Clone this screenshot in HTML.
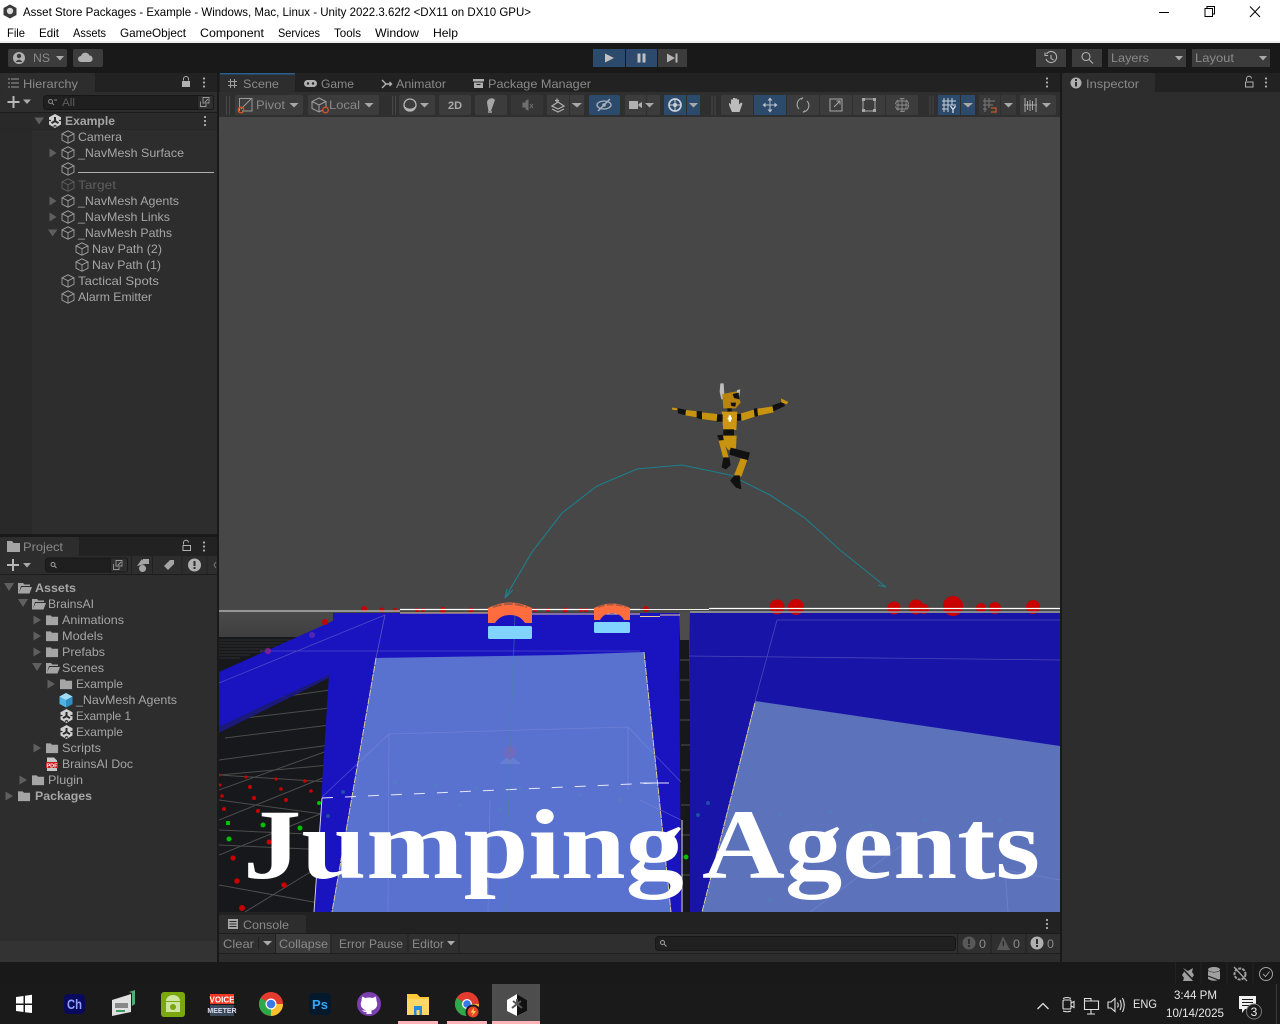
<!DOCTYPE html>
<html><head><meta charset="utf-8"><title>Unity Editor</title>
<style>
html,body{margin:0;padding:0;width:1280px;height:1024px;overflow:hidden;background:#191919}
svg{display:block}
text{font-family:"Liberation Sans",sans-serif;font-size:12px;fill:#a6a6a6}
.m text{fill:#000}
.d text{fill:#8a8a8a}
.b{font-weight:bold}
.btn{fill:#3c3c3c}
.blu{fill:#2c4a6b}
.ic{fill:none;stroke:#b0b0b0;stroke-width:1.1}
</style></head><body>
<svg width="1280" height="1024" viewBox="0 0 1280 1024" xmlns="http://www.w3.org/2000/svg">
<defs>
<symbol id="cube" viewBox="0 0 14 14" overflow="visible"><path d="M7 .8 13 3.8V10.2L7 13.3 1 10.2V3.8ZM1 3.8 7 6.8 13 3.8M7 6.8V13.3" fill="none" stroke="#a0a0a0" stroke-width=".9"/></symbol>
<symbol id="cubeg" viewBox="0 0 14 14" overflow="visible"><path d="M7 .8 13 3.8V10.2L7 13.3 1 10.2V3.8ZM1 3.8 7 6.8 13 3.8M7 6.8V13.3" fill="none" stroke="#5f5f5f" stroke-width=".9"/></symbol>
<symbol id="fold" viewBox="0 0 14 12" overflow="visible"><path d="M0 1H5L6.500 2.500H13V11.500H0Z" fill="#a5a5a5"/></symbol>
<symbol id="open" viewBox="0 0 14 12" overflow="visible"><path d="M0 1H5L6.500 2.500H12V4H3L1 10.500 3.600 5H14L11.500 11.500H0Z" fill="#a5a5a5"/></symbol>
<symbol id="unity" viewBox="0 0 14 14" overflow="visible"><path d="M7 0 13 3.300V10.500L7 14 1 10.500V3.300Z" fill="#d0d0d0"/><path d="M7 7V3M7 7 3.500 9.200M7 7 10.500 9.200" fill="none" stroke="#2b2b2b" stroke-width="2"/><path d="M1 6.500H3M11 6.500H13M5.500 12.500 7 11.500 8.500 12.500" stroke="#2b2b2b" stroke-width="1.300" fill="none"/></symbol>
</defs>

<!-- window chrome -->
<rect width="1280" height="42" fill="#fff"/><rect y="41" width="1280" height="2" fill="#f0f0f0"/>
<rect y="43" width="1280" height="30" fill="#191919"/>
<path d="M10 4.500 16.500 8V15L10 18.500 3.500 15V8Z" fill="#3a3a3a"/><circle cx="10" cy="11" r="3.200" fill="#ddd"/>
<g class="m">
<text x="23" y="16" textLength="508" lengthAdjust="spacingAndGlyphs">Asset Store Packages - Example - Windows, Mac, Linux - Unity 2022.3.62f2 &lt;DX11 on DX10 GPU&gt;</text>
<text x="7" y="37" textLength="18" lengthAdjust="spacingAndGlyphs">File</text>
<text x="39" y="37" textLength="20" lengthAdjust="spacingAndGlyphs">Edit</text>
<text x="73" y="37" textLength="33" lengthAdjust="spacingAndGlyphs">Assets</text>
<text x="120" y="37" textLength="66" lengthAdjust="spacingAndGlyphs">GameObject</text>
<text x="200" y="37" textLength="64" lengthAdjust="spacingAndGlyphs">Component</text>
<text x="278" y="37" textLength="42" lengthAdjust="spacingAndGlyphs">Services</text>
<text x="334" y="37" textLength="27" lengthAdjust="spacingAndGlyphs">Tools</text>
<text x="375" y="37" textLength="44" lengthAdjust="spacingAndGlyphs">Window</text>
<text x="433" y="37" textLength="25" lengthAdjust="spacingAndGlyphs">Help</text>
</g>
<path d="M1159 12.500H1169" stroke="#000"/>
<path d="M1205 8.500H1212.500V16.500H1205ZM1207 8V6.500H1214.500V14H1212.500" fill="none" stroke="#000"/>
<path d="M1250 6.500 1260 17M1260 6.500 1250 17" stroke="#000"/>

<!-- main toolbar -->
<rect x="8" y="49" width="59" height="18" rx="2" class="btn"/><rect x="73" y="49" width="30" height="18" rx="2" class="btn"/>
<circle cx="19" cy="58" r="6" fill="#b0b0b0"/><circle cx="19" cy="56" r="2.200" fill="#3c3c3c"/><path d="M15.500 62Q19 57.500 22.500 62" fill="#3c3c3c"/>
<g class="d"><text x="33" y="62" textLength="17" lengthAdjust="spacingAndGlyphs">NS</text></g>
<path d="M56 56H64L60 60.500Z" fill="#aaa"/>
<path d="M81 62a3 3 0 0 1 0-6a4.500 4.500 0 0 1 8.500-.5a3.300 3.300 0 0 1 .5 6.500Z" fill="#b0b0b0"/>
<rect x="593" y="49" width="32" height="18" class="blu"/><rect x="626" y="49" width="31" height="18" class="blu"/><rect x="658" y="49" width="29" height="18" class="btn"/>
<path d="M605 53.500 614 58 605 62.500Z" fill="#c0c0c0"/><rect x="637.500" y="53.500" width="3" height="9" fill="#c0c0c0"/><rect x="642.500" y="53.500" width="3" height="9" fill="#c0c0c0"/>
<path d="M667 53.500 675 58 667 62.500Z" fill="#b5b5b5"/><rect x="675.500" y="53.500" width="2" height="9" fill="#b5b5b5"/>
<rect x="1036" y="49" width="30" height="18" class="btn"/><rect x="1072" y="49" width="30" height="18" class="btn"/><rect x="1108" y="49" width="78" height="18" class="btn"/><rect x="1192" y="49" width="78" height="18" class="btn"/>
<path d="M1046.500 54a5.500 5.500 0 1 1-.5 5M1051 55V58.500L1053.500 60M1045 52.500V55.500H1048" class="ic"/>
<circle cx="1086" cy="56.500" r="4" class="ic"/><path d="M1089 59.500 1093 63.500" class="ic"/>
<g class="d"><text x="1111" y="62" textLength="38" lengthAdjust="spacingAndGlyphs">Layers</text><text x="1195" y="62" textLength="39" lengthAdjust="spacingAndGlyphs">Layout</text></g>
<path d="M1175 56H1183L1179 60.500ZM1259 56H1267L1263 60.500Z" fill="#aaa"/>

<!-- hierarchy -->
<rect x="0" y="73" width="217" height="889" fill="#2d2d2d"/>
<rect x="0" y="73" width="217" height="19" fill="#222"/>
<rect x="0" y="73" width="95" height="19" rx="2" fill="#2d2d2d"/>
<path d="M8 79H10M11 79H19M8 83H10M11 83H19M8 87H10M11 87H19" stroke="#999"/>
<g class="d"><text x="23" y="88" textLength="55" lengthAdjust="spacingAndGlyphs">Hierarchy</text></g>
<path d="M183.500 80.500V79a2.500 2.500 0 0 1 5 0V80.500" fill="none" stroke="#b0b0b0"/><rect x="182" y="81" width="8" height="6" fill="#b0b0b0"/>
<circle cx="204" cy="78.500" r="1.100" fill="#b0b0b0"/><circle cx="204" cy="82.500" r="1.100" fill="#b0b0b0"/><circle cx="204" cy="86.500" r="1.100" fill="#b0b0b0"/>
<path d="M13.500 96V108M7.500 102H19.500" stroke="#b8b8b8" stroke-width="2"/><path d="M23 99.500H31L27 104Z" fill="#aaa"/>
<rect x="43.500" y="95.500" width="170" height="14" rx="3" fill="#1f1f1f" stroke="#171717"/>
<rect x="197.500" y="95.500" width="16" height="14" rx="2" fill="#2f2f2f" stroke="#1a1a1a"/>
<path d="M200.500 101.500V106.500H206V104M203 99V103H209V97.500H203ZM205 102 208 99" fill="none" stroke="#999" stroke-width=".9"/>
<circle cx="50.500" cy="101.500" r="2" fill="none" stroke="#8a8a8a"/><path d="M52 103 54 105M54 100H57" stroke="#8a8a8a"/>
<text x="62" y="106" textLength="13" lengthAdjust="spacingAndGlyphs" style="font-size:11px;fill:#5d5d5d">All</text>
<rect x="0" y="112" width="217" height="1" fill="#1c1c1c"/>
<rect x="0" y="113" width="32" height="421" fill="#292929"/>
<rect x="32" y="113" width="185" height="16" fill="#2a2a2a"/><rect x="0" y="129" width="217" height="1" fill="#272727"/>
<path d="M34.500 117.500H44L39 124.500Z" fill="#5f5f5f"/>
<use href="#unity" x="48" y="114" width="14" height="14"/>
<text x="65" y="125" textLength="50" lengthAdjust="spacingAndGlyphs" class="b">Example</text>
<circle cx="205" cy="117" r="1.100" fill="#b0b0b0"/><circle cx="205" cy="121" r="1.100" fill="#b0b0b0"/><circle cx="205" cy="125" r="1.100" fill="#b0b0b0"/>
<use href="#cube" x="61" y="130" width="14" height="14"/><text x="78" y="141" textLength="44" lengthAdjust="spacingAndGlyphs">Camera</text>
<path d="M49.500 148.500V157.500L56.500 153Z" fill="#5f5f5f"/>
<use href="#cube" x="61" y="146" width="14" height="14"/><text x="78" y="157" textLength="106" lengthAdjust="spacingAndGlyphs">_NavMesh Surface</text>
<use href="#cube" x="61" y="162" width="14" height="14"/><rect x="78" y="172" width="136" height="1" fill="#aeaeae"/>
<use href="#cubeg" x="61" y="178" width="14" height="14"/><text x="78" y="189" textLength="38" lengthAdjust="spacingAndGlyphs" style="fill:#5f5f5f">Target</text>
<path d="M49.500 196.500V205.500L56.500 201Z" fill="#5f5f5f"/>
<use href="#cube" x="61" y="194" width="14" height="14"/><text x="78" y="205" textLength="101" lengthAdjust="spacingAndGlyphs">_NavMesh Agents</text>
<path d="M49.500 212.500V221.500L56.500 217Z" fill="#5f5f5f"/>
<use href="#cube" x="61" y="210" width="14" height="14"/><text x="78" y="221" textLength="92" lengthAdjust="spacingAndGlyphs">_NavMesh Links</text>
<path d="M48 229.500H57.500L52.500 236.500Z" fill="#5f5f5f"/>
<use href="#cube" x="61" y="226" width="14" height="14"/><text x="78" y="237" textLength="94" lengthAdjust="spacingAndGlyphs">_NavMesh Paths</text>
<use href="#cube" x="75" y="242" width="14" height="14"/><text x="92" y="253" textLength="70" lengthAdjust="spacingAndGlyphs">Nav Path (2)</text>
<use href="#cube" x="75" y="258" width="14" height="14"/><text x="92" y="269" textLength="69" lengthAdjust="spacingAndGlyphs">Nav Path (1)</text>
<use href="#cube" x="61" y="274" width="14" height="14"/><text x="78" y="285" textLength="81" lengthAdjust="spacingAndGlyphs">Tactical Spots</text>
<use href="#cube" x="61" y="290" width="14" height="14"/><text x="78" y="301" textLength="74" lengthAdjust="spacingAndGlyphs">Alarm Emitter</text>

<!-- project -->
<rect x="0" y="534" width="217" height="3" fill="#191919"/>
<rect x="0" y="537" width="217" height="19" fill="#222"/><rect x="0" y="537" width="79" height="19" rx="2" fill="#2d2d2d"/>
<path d="M7 541H12L13.500 543H20V552H7Z" fill="#a5a5a5"/>
<g class="d"><text x="23" y="551" textLength="40" lengthAdjust="spacingAndGlyphs">Project</text></g>
<path d="M183.500 544.500V543a2.500 2.500 0 0 1 5-.5" fill="none" stroke="#b0b0b0"/><rect x="183" y="545.500" width="7.500" height="5" fill="none" stroke="#b0b0b0"/>
<circle cx="204" cy="542.500" r="1.100" fill="#b0b0b0"/><circle cx="204" cy="546.500" r="1.100" fill="#b0b0b0"/><circle cx="204" cy="550.500" r="1.100" fill="#b0b0b0"/>
<path d="M13 559V571M7 565H19" stroke="#b8b8b8" stroke-width="2"/><path d="M23 563H31L27 567.500Z" fill="#aaa"/>
<rect x="45.500" y="558" width="82" height="14" rx="3" fill="#1f1f1f" stroke="#171717"/>
<rect x="110.500" y="558" width="17" height="14" rx="2" fill="#2f2f2f" stroke="#1a1a1a"/>
<path d="M113.500 564V569.500H119V567M116 561.500V566H122V560.500H116ZM118 565 121 562" fill="none" stroke="#999" stroke-width=".9"/>
<circle cx="53" cy="564.500" r="2" fill="none" stroke="#a0a0a0"/><path d="M54.500 566 56.500 568" stroke="#a0a0a0"/>
<path d="M131.500 556V574M152.500 556V574M182 556V574M207 556V574" stroke="#222"/>
<path d="M137 566 142 559 145 564ZM142.500 565a3.500 3.500 0 1 0 .1 0ZM143 559H149V564H143Z" fill="#a5a5a5"/>
<path d="M164 566 170 560H174V564L168 570Z" fill="#a5a5a5"/>
<circle cx="194.500" cy="565" r="6.500" fill="#b0b0b0"/><rect x="193.500" y="561" width="2" height="5" fill="#2d2d2d"/><rect x="193.500" y="567" width="2" height="2" fill="#2d2d2d"/>
<path d="M216 562 214 565 216 568" fill="none" stroke="#777"/>
<rect x="0" y="574" width="217" height="1" fill="#1c1c1c"/>
<path d="M4 583H14L9 591Z" fill="#5f5f5f"/><use href="#open" x="18" y="582" width="14" height="12"/><text x="35" y="592" textLength="41" lengthAdjust="spacingAndGlyphs" class="b">Assets</text>
<path d="M18 599H28L23 607Z" fill="#5f5f5f"/><use href="#open" x="32" y="598" width="14" height="12"/><text x="48" y="608" textLength="46" lengthAdjust="spacingAndGlyphs">BrainsAI</text>
<path d="M33.500 615.500V624.500L41 620Z" fill="#5f5f5f"/><use href="#fold" x="46" y="614" width="13" height="12"/><text x="62" y="624" textLength="62" lengthAdjust="spacingAndGlyphs">Animations</text>
<path d="M33.500 631.500V640.500L41 636Z" fill="#5f5f5f"/><use href="#fold" x="46" y="630" width="13" height="12"/><text x="62" y="640" textLength="41" lengthAdjust="spacingAndGlyphs">Models</text>
<path d="M33.500 647.500V656.500L41 652Z" fill="#5f5f5f"/><use href="#fold" x="46" y="646" width="13" height="12"/><text x="62" y="656" textLength="43" lengthAdjust="spacingAndGlyphs">Prefabs</text>
<path d="M32 663H42L37 671Z" fill="#5f5f5f"/><use href="#open" x="46" y="662" width="14" height="12"/><text x="62" y="672" textLength="42" lengthAdjust="spacingAndGlyphs">Scenes</text>
<path d="M47.500 679.500V688.500L55 684Z" fill="#5f5f5f"/><use href="#fold" x="60" y="678" width="13" height="12"/><text x="76" y="688" textLength="47" lengthAdjust="spacingAndGlyphs">Example</text>
<path d="M66 693 72.500 696.500V704L66 707.500 59.500 704V696.500Z" fill="#4fb4e4"/><path d="M59.500 696.500 66 700 72.500 696.500 66 693Z" fill="#a5dcf4"/><path d="M66 700V707.500L72.500 704V696.500Z" fill="#2f8fc4"/>
<text x="76" y="704" textLength="101" lengthAdjust="spacingAndGlyphs">_NavMesh Agents</text>
<use href="#unity" x="59.500" y="709" width="14" height="14"/><text x="76" y="720" textLength="55" lengthAdjust="spacingAndGlyphs">Example 1</text>
<use href="#unity" x="59.500" y="725" width="14" height="14"/><text x="76" y="736" textLength="47" lengthAdjust="spacingAndGlyphs">Example</text>
<path d="M33.500 743.500V752.500L41 748Z" fill="#5f5f5f"/><use href="#fold" x="46" y="742" width="13" height="12"/><text x="62" y="752" textLength="39" lengthAdjust="spacingAndGlyphs">Scripts</text>
<path d="M47 757.500H54L57 760.500V771H47Z" fill="#c8c8c8"/><rect x="46" y="762" width="12" height="6" fill="#c81818"/><text x="52" y="767.300" text-anchor="middle" style="font-size:5.500px;font-weight:bold;fill:#fff">PDF</text>
<text x="62" y="768" textLength="71" lengthAdjust="spacingAndGlyphs">BrainsAI Doc</text>
<path d="M19.500 775.500V784.500L27 780Z" fill="#5f5f5f"/><use href="#fold" x="32" y="774" width="13" height="12"/><text x="48" y="784" textLength="35" lengthAdjust="spacingAndGlyphs">Plugin</text>
<path d="M5.500 791.500V800.500L13 796Z" fill="#5f5f5f"/><use href="#fold" x="18" y="790" width="13" height="12"/><text x="35" y="800" textLength="57" lengthAdjust="spacingAndGlyphs" class="b">Packages</text>
<rect x="0" y="941" width="217" height="21" fill="#333"/>

<!-- tabs for scene -->
<rect x="219" y="73" width="841" height="19" fill="#222"/>
<rect x="220" y="73" width="75" height="19" rx="2" fill="#2d2d2d"/><rect x="220" y="73" width="75" height="1.500" fill="#2c5d8f"/>
<path d="M230.500 79V88M234.500 79V88M228 81.500H237M228 85.500H237" stroke="#a0a0a0"/>
<g class="d">
<text x="243" y="88" textLength="36" lengthAdjust="spacingAndGlyphs">Scene</text>
<text x="321" y="88" textLength="33" lengthAdjust="spacingAndGlyphs">Game</text>
<text x="396" y="88" textLength="50" lengthAdjust="spacingAndGlyphs">Animator</text>
<text x="488" y="88" textLength="103" lengthAdjust="spacingAndGlyphs">Package Manager</text>
</g>
<rect x="304" y="80" width="13" height="7" rx="3.500" fill="#b0b0b0"/><circle cx="308" cy="83.500" r="1.200" fill="#222"/><circle cx="313" cy="83.500" r="1.200" fill="#222"/>
<path d="M382 80 386 84 382 88M386 84H392M389.500 82 391.500 84 389.500 86" fill="none" stroke="#b0b0b0" stroke-width="1.400"/>
<path d="M473 79H484V81.500H473ZM474 82.500H483V88H474Z" fill="#b0b0b0"/><rect x="476.500" y="84" width="4" height="1" fill="#222"/>
<circle cx="1047" cy="78.500" r="1.100" fill="#b0b0b0"/><circle cx="1047" cy="82.500" r="1.100" fill="#b0b0b0"/><circle cx="1047" cy="86.500" r="1.100" fill="#b0b0b0"/>

<!-- scene toolbar -->
<rect x="219" y="92" width="841" height="25" fill="#2f2f2f"/>
<path d="M226.500 96V115M229.500 96V115M392.500 96V115M395.500 96V115M712 96V115M715 96V115M930 96V115M933 96V115" stroke="#474747"/>
<rect x="235" y="95" width="68" height="20" rx="2" class="btn"/><rect x="308" y="95" width="71" height="20" rx="2" class="btn"/>
<rect x="399" y="95" width="36" height="20" rx="2" class="btn"/><rect x="439" y="95" width="32" height="20" rx="2" class="btn"/><rect x="475" y="95" width="32" height="20" rx="2" class="btn"/>
<rect x="511" y="95" width="32" height="20" rx="2" fill="#363636"/><rect x="547" y="95" width="22" height="20" class="btn"/><rect x="570" y="95" width="14" height="20" class="btn"/>
<rect x="589" y="95" width="31" height="20" rx="2" class="blu"/><rect x="625" y="95" width="21" height="20" class="btn"/><rect x="647" y="95" width="13" height="20" class="btn"/>
<rect x="664" y="95" width="22" height="20" class="blu"/><rect x="687" y="95" width="13" height="20" class="blu"/>
<rect x="721" y="95" width="32" height="20" class="btn"/><rect x="754" y="95" width="32" height="20" class="blu"/><rect x="787" y="95" width="32" height="20" class="btn"/><rect x="820" y="95" width="32" height="20" class="btn"/><rect x="853" y="95" width="32" height="20" class="btn"/><rect x="886" y="95" width="32" height="20" class="btn"/>
<rect x="938" y="95" width="22" height="20" class="blu"/><rect x="961" y="95" width="14" height="20" class="blu"/><rect x="979" y="95" width="21" height="20" fill="#383838"/><rect x="1001" y="95" width="15" height="20" fill="#383838"/><rect x="1020" y="95" width="36" height="20" rx="2" class="btn"/>
<path d="M239.500 111V98.500H252V111H242" fill="none" stroke="#9a9a9a"/><path d="M241 109 251 99" stroke="#9a9a9a"/><circle cx="241" cy="110" r="2.800" fill="none" stroke="#d2532a" stroke-width="1.300"/>
<g class="d"><text x="256" y="109" textLength="29" lengthAdjust="spacingAndGlyphs">Pivot</text><text x="329" y="109" textLength="31" lengthAdjust="spacingAndGlyphs">Local</text></g>
<path d="M289.500 103H298.500L294 107.500ZM364.500 103H373.500L369 107.500ZM420 103H429L424.500 107.500ZM571.500 103H582L577 107.500ZM645 103H654L649.500 107.500ZM689 103H698L693.500 107.500ZM963 103H973L968 107.500ZM1004 103H1013L1008.500 107.500ZM1042 103H1051L1046.500 107.500Z" fill="#a8a8a8"/>
<path d="M319 98 326 101.500V108.500L319 112 312 108.500V101.500ZM312 101.500 319 105 326 101.500M319 105V112" fill="none" stroke="#a0a0a0"/><circle cx="325.500" cy="110" r="2.800" fill="#3c3c3c" stroke="#d2532a" stroke-width="1.300"/>
<circle cx="410" cy="105" r="6" fill="none" stroke="#b5b5b5" stroke-width="1.300"/><path d="M404.500 106a5.500 5.500 0 0 0 11 0 7 7 0 0 1-11 0Z" fill="#b5b5b5"/>
<text x="448" y="109" textLength="14" lengthAdjust="spacingAndGlyphs" class="b" style="font-size:11px;fill:#aaa">2D</text>
<path d="M487 103a4.500 4.500 0 0 1 8-3L491 111H488.500Z" fill="#a5a5a5"/><path d="M488 112H492" stroke="#a5a5a5" stroke-width="1.500"/>
<path d="M523 103H525V107H523ZM526 101 528 100V110L526 109ZM530 104 533 108M533 104 530 108" stroke="#6e6e6e" fill="#6e6e6e"/>
<path d="M552 106 558 102 564 106 558 109ZM552 109 558 112 564 109M557 98.500V103M555 100.500H559" fill="none" stroke="#b0b0b0" stroke-width="1.200"/>
<ellipse cx="604" cy="105" rx="7" ry="4" fill="none" stroke="#aab3bd" stroke-width="1.300"/><circle cx="604" cy="105" r="1.800" fill="#aab3bd"/><path d="M598 111 610 99" stroke="#aab3bd" stroke-width="1.400"/>
<rect x="629" y="101" width="9" height="8" fill="#b0b0b0"/><path d="M638.500 104 642 102V108L638.500 106Z" fill="#b0b0b0"/>
<circle cx="675" cy="105" r="6" fill="none" stroke="#c8d0d8" stroke-width="1.700"/><circle cx="675" cy="105" r="2" fill="#c8d0d8"/><path d="M675 99V111M669 105H681" stroke="#c8d0d8" stroke-width="1"/>
<path d="M732 112 729 105V102.500L731 104.500V99.500H733V103V98H735V103V98.500H737V103V99.500H739V104.500L741 102.500 742.500 103.500 739.500 112Z" fill="#bcbcbc"/>
<path d="M770 97.500 772.500 100.500H767.500ZM770 112.500 772.500 109.500H767.500ZM762.500 105 765.500 102.500V107.500ZM777.500 105 774.500 102.500V107.500Z" fill="#b8c0c8"/><path d="M770 100V110M765 105H775" stroke="#b8c0c8"/>
<path d="M799 109a6.500 6.500 0 0 1 4-11M807 101a6.500 6.500 0 0 1-4 11M803 97.500 801 99.500M803 112.500 805 110.500" fill="none" stroke="#a8a8a8" stroke-width="1.100"/>
<rect x="830" y="99" width="12" height="12" fill="none" stroke="#a8a8a8"/><path d="M834 107 840 101M836.500 101H840V104.500" fill="none" stroke="#a8a8a8"/>
<path d="M864 99H874M864 111H874M863 100V110M875 100V110" stroke="#a8a8a8" stroke-width="1"/><rect x="862" y="98" width="3" height="3" fill="#a8a8a8"/><rect x="873" y="98" width="3" height="3" fill="#a8a8a8"/><rect x="862" y="109" width="3" height="3" fill="#a8a8a8"/><rect x="873" y="109" width="3" height="3" fill="#a8a8a8"/>
<circle cx="902" cy="105" r="6.500" fill="none" stroke="#8e8e8e" stroke-dasharray="5 2"/><path d="M902 99V111M896 105H908M898 101H906V109H898Z" fill="none" stroke="#8e8e8e" stroke-width=".9"/>
<path d="M944 98V112M948 98V112M952 98V105M942 101H956M942 105H956M942 109H948" stroke="#c8d0d8"/><path d="M950.500 106 953 109.500 955.500 106M953 109.500V113" fill="none" stroke="#d8dde2" stroke-width="1.300"/>
<path d="M985 98V112M989 98V108M983 101H995M983 105H993M983 109H987" stroke="#797979"/><path d="M991 108H996V112H991" fill="none" stroke="#b2502a" stroke-width="1.500"/>
<path d="M1025 98V112M1036 98V112M1027.500 101V110M1030 100V111M1032.500 101V110M1024 105H1037" stroke="#a8a8a8"/>

<!-- scene view -->
<rect x="219" y="117" width="841" height="795" fill="#474747"/>
<svg x="219" y="117" width="841" height="795" viewBox="219 117 841 795">
<!-- ground -->
<linearGradient id="gg" x1="0" y1="0" x2="0" y2="1"><stop offset="0" stop-color="#4a4a4a"/><stop offset="1" stop-color="#3f3f3f"/></linearGradient>
<rect x="219" y="612" width="120" height="25" fill="url(#gg)"/>
<rect x="219" y="637" width="120" height="275" fill="#17181b"/>
<g stroke="#2e2e2e" stroke-width="1"><path d="M219 640H300M219 643H290M219 646H280M219 649H270M219 652H262M219 655H250M219 658H240"/></g>
<g stroke="#4c4c4c" stroke-width="1" fill="none">
<path d="M260 700 330 690M245 718 330 708M225 738 330 725M219 760 330 745M219 775 330 765"/>
<path d="M219 790 330 750M219 820 330 775M219 855 330 810M245 912 330 860"/>
<path d="M219 775 330 782M219 800 330 815M219 845 330 850M219 885 330 905M219 830 330 835"/>
</g>
<!-- blue -->
<path d="M219 672 333 621V613H681V912H314L329 675 276 700 219 727Z" fill="#1a14c0"/>
<path d="M219 727 329 675V678L219 733Z" fill="#1c1a78"/>
<path d="M219 683 385 615M260 651H640" stroke="#5a57c8" stroke-width=".8" fill="none" opacity=".8"/>
<path d="M385 615 376 658" stroke="#5a57c8" stroke-width=".8"/>
<circle cx="312" cy="635" r="3" fill="#6a2db0" opacity=".7"/><circle cx="268" cy="651" r="3.200" fill="#8a2090" opacity=".8"/>
<!-- light panels -->
<path d="M376 658 560 655 644 652 671 912H332Z" fill="#5a72cf"/>
<path d="M376 658 332 912M644 652 671 912" fill="none" stroke="#e8d79a" stroke-width=".9" stroke-dasharray="7 1"/>
<!-- gap -->
<path d="M679 612H689L692 912H681Z" fill="#17181b"/><path d="M679 612H689V640H680Z" fill="#4c4c4c"/>
<path d="M680 660H689M680 680H689M680 700H690M680 720H690M681 745H691M681 770H691M681 805H691M681 835H692M681 875H692" stroke="#4e4e4e"/>
<!-- right -->
<rect x="690" y="613" width="370" height="299" fill="#1914a8"/>
<path d="M755 701 1060 746V912H702Z" fill="#5c73bc"/>
<path d="M755 703 702 912" stroke="#e8d79a" stroke-width=".9" stroke-dasharray="7 1"/>
<path d="M777 620 755 701M777 620H1060M689 656 1060 660" stroke="#4a47b8" stroke-width=".8" fill="none"/>
<!-- wire box -->
<g stroke="#8492dc" stroke-width=".8" fill="none" opacity=".45">
<path d="M389 734 628 727 681 782M389 734 388 912M628 727 628 790M389 734 322 797M640 800 681 820M488 912 490 800M1005 870 1060 880M1005 870 1008 912"/>
<path d="M909 840 810 912"/>
</g>
<path d="M322 798 655 783" stroke="#e8e6f8" stroke-width="1" stroke-dasharray="11 12"/>
<path d="M322 798 314 912" stroke="#e0d8f0" stroke-width=".9"/>
<path d="M640 783H669" stroke="#e8e6f8"/>
<path d="M682 820V912" stroke="#dcd8f8" fill="none"/>
<!-- teal line -->
<path d="M515 615 510 760 505 912" stroke="#3f8a92" stroke-width=".7" opacity=".7" fill="none"/>
<path d="M505 598 532 552 562 513 597 486 637 469 682 465 730 475 770 495 805 518 840 550 886 587M505 598 513 590M505 598 507 589M886 587 878 585" stroke="#1d7f8c" stroke-width="1.100" fill="none"/>
<!-- faint spawn -->
<g opacity=".3"><path d="M500 763 510 755 520 763V764H501Z" fill="#8a9ce0"/><path d="M510 745 516 749V756L510 760 504 756V749Z" fill="#a05ca0"/></g>
<!-- dots -->
<g fill="#c80000">
<circle cx="364" cy="609" r="3"/><circle cx="382" cy="610" r="2.500"/><circle cx="395" cy="610" r="2"/><circle cx="417" cy="610" r="2"/><circle cx="423" cy="610" r="2"/><circle cx="443" cy="610" r="3"/><circle cx="471" cy="610" r="2.500"/><circle cx="535" cy="610" r="2"/><circle cx="548" cy="610" r="2"/><circle cx="565" cy="610" r="2.500"/><circle cx="581" cy="610" r="2"/><circle cx="586" cy="610" r="2"/><circle cx="646" cy="609" r="3"/>
<circle cx="777" cy="607" r="7.500"/><circle cx="796" cy="607" r="8"/><circle cx="894" cy="608" r="6.500"/><circle cx="916" cy="607" r="7.500"/><circle cx="924" cy="609" r="5"/><circle cx="953" cy="606" r="10"/><circle cx="981" cy="608" r="5"/><circle cx="995" cy="608" r="6"/><circle cx="1033" cy="607" r="7"/>
<circle cx="325" cy="622" r="3"/>
<circle cx="219" cy="775" r="1.500"/><circle cx="220" cy="785" r="1.500"/><circle cx="222" cy="796" r="1.800"/><circle cx="224" cy="809" r="2"/><circle cx="246" cy="777" r="1.600"/><circle cx="250" cy="787" r="2"/><circle cx="254" cy="798" r="2"/><circle cx="258" cy="811" r="2"/><circle cx="276" cy="779" r="1.600"/><circle cx="281" cy="789" r="1.800"/><circle cx="286" cy="800" r="2"/><circle cx="305" cy="781" r="1.800"/><circle cx="311" cy="791" r="1.800"/>
<circle cx="269" cy="842" r="2.500"/><circle cx="233" cy="858" r="2.600"/><circle cx="237" cy="881" r="2.800"/><circle cx="284" cy="885" r="2.800"/><circle cx="242" cy="908" r="3"/>
</g>
<g fill="#00c000"><rect x="226" y="821" width="4" height="4"/><circle cx="263" cy="825" r="2.500"/><circle cx="300" cy="828" r="2.500"/><circle cx="229" cy="839" r="2.500"/><circle cx="319" cy="803" r="2"/><circle cx="686" cy="857" r="2.500"/></g>
<g fill="#1d4fa8"><circle cx="343" cy="792" r="2"/><circle cx="328" cy="816" r="2"/><circle cx="708" cy="803" r="2"/><circle cx="698" cy="815" r="2"/></g>
<g fill="#4a8cb0" opacity=".35"><circle cx="395" cy="783" r="2"/><circle cx="436" cy="786" r="2"/><circle cx="476" cy="788" r="2"/><circle cx="520" cy="789" r="2"/><circle cx="580" cy="795" r="2"/><circle cx="620" cy="800" r="2"/><circle cx="460" cy="805" r="2"/><circle cx="500" cy="810" r="2"/><circle cx="780" cy="815" r="2"/><circle cx="830" cy="812" r="2"/><circle cx="870" cy="825" r="2"/><circle cx="925" cy="820" r="2"/><circle cx="955" cy="835" r="2"/><circle cx="1000" cy="820" r="2"/><circle cx="770" cy="900" r="2"/></g>
<!-- horizon lines -->
<path d="M219 611H400" stroke="#c4c4c4" stroke-width="1.200"/>
<path d="M400 609.500H640" stroke="#fff" stroke-width="1.200"/>
<path d="M709 608.500H1060" stroke="#fff" stroke-width="1.300"/><path d="M640 609.500H709" stroke="#eee"/>
<path d="M690 612H1060" stroke="#9aa0a8" stroke-width="1.500"/>
<path d="M400 613H500M500 614H640M640 616.500H660M660 615H680" stroke="#e8c98a" stroke-width=".9"/>
<!-- waypoints -->
<path d="M488 623V608Q510 597 532 608V623H525Q520 615 510 615Q500 615 495 623Z" fill="#ff6d3f"/>
<path d="M493 607Q510 601 527 607" stroke="#a85a42" stroke-width="2" fill="none" stroke-dasharray="9 2"/>
<rect x="488" y="626" width="44" height="13" rx="1.500" fill="#80d4ff"/>
<path d="M594 620V608Q612 599 630 608V620H624Q620 613 612 613Q604 613 600 620Z" fill="#ff6d3f"/>
<path d="M598 607Q612 602 626 607" stroke="#a85a42" stroke-width="1.800" fill="none" stroke-dasharray="7 2"/>
<rect x="594" y="622" width="36" height="11" rx="1.500" fill="#80d4ff"/>
<!-- character -->
<g transform="translate(640 370) scale(.3333)">
<path d="M241 40 251 40 254 88 244 88 239 65ZM301 58 296 92 288 90 291 60Z" fill="#bcbcbc"/>
<path d="M247 72 290 64 302 98 287 115 250 115Z" fill="#b8840f"/>
<path d="M278 72 296 68 298 88 282 84ZM272 98 288 98 286 110 274 108Z" fill="#111"/>
<rect x="262" y="115" width="13" height="11" fill="#111"/>
<path d="M245 125H292L289 180H250Z" fill="#cd9714"/>
<path d="M229 133H248V155H229ZM291 132H303V152H291Z" fill="#111"/>
<path d="M266 136H273V155H266ZM263 143H276V148H263Z" fill="#fff"/>
<path d="M250 178H282V197H250Z" fill="#111"/>
<path d="M250 197H290L288 235 265 240 250 220Z" fill="#c8930f"/>
<path d="M96 113 116 115 116 121 96 119Z" fill="#c8930f"/>
<path d="M112 114 140 120 138 136 114 130Z" fill="#111"/>
<path d="M138 120 174 124 172 142 136 136ZM185 127 232 132 230 153 184 147Z" fill="#c8930f"/>
<path d="M170 123 186 124 186 148 170 144Z" fill="#111"/>
<path d="M303 130 342 119 345 140 305 153Z" fill="#c8930f"/>
<path d="M341 116 352 114 355 138 344 140Z" fill="#111"/>
<path d="M352 116 399 109 401 127 354 137Z" fill="#c8930f"/>
<path d="M397 106 430 94 435 108 400 124Z" fill="#111"/>
<path d="M423 85 445 96 440 103 424 97Z" fill="#c8930f"/>
<path d="M231 196 248 194 252 215 240 216Z" fill="#111"/>
<path d="M236 212 251 210 266 262 250 266Z" fill="#c8930f"/>
<path d="M250 262 268 262 272 285 258 298 245 292Z" fill="#111"/>
<path d="M272 233 330 248 324 271 268 254Z" fill="#111"/>
<path d="M302 265 322 270 304 320 282 316Z" fill="#c8930f"/>
<path d="M283 316 299 316 304 358 288 353 270 332Z" fill="#111"/>
</g>
<!-- title text -->
<text x="243" y="878" textLength="441" lengthAdjust="spacingAndGlyphs" style='font-family:"Liberation Serif",serif;font-weight:bold;font-size:100px;fill:#fff'>Jumping</text>
<text x="702" y="878" textLength="338" lengthAdjust="spacingAndGlyphs" style='font-family:"Liberation Serif",serif;font-weight:bold;font-size:100px;fill:#fff'>Agents</text>
</svg>
<rect x="1060" y="92" width="2" height="870" fill="#191919"/>

<!-- inspector -->
<rect x="1062" y="73" width="218" height="889" fill="#2d2d2d"/><rect x="1062" y="73" width="218" height="19" fill="#222"/>
<rect x="1062" y="73" width="93" height="19" rx="2" fill="#2d2d2d"/>
<circle cx="1076" cy="83" r="5.500" fill="#b0b0b0"/><rect x="1075" y="82" width="2" height="4.500" fill="#2d2d2d"/><rect x="1075" y="79" width="2" height="2" fill="#2d2d2d"/>
<g class="d"><text x="1086" y="88" textLength="53" lengthAdjust="spacingAndGlyphs">Inspector</text></g>
<path d="M1246.500 81V79a2.500 2.500 0 0 1 5-.5" fill="none" stroke="#b0b0b0"/><rect x="1245.500" y="82" width="7.500" height="5" fill="none" stroke="#b0b0b0"/>
<circle cx="1266" cy="78.500" r="1.100" fill="#b0b0b0"/><circle cx="1266" cy="82.500" r="1.100" fill="#b0b0b0"/><circle cx="1266" cy="86.500" r="1.100" fill="#b0b0b0"/>

<!-- console -->
<rect x="219" y="912" width="841" height="50" fill="#2d2d2d"/><rect x="219" y="912" width="841" height="22" fill="#222"/>
<rect x="219" y="915" width="87" height="19" rx="2" fill="#2d2d2d"/>
<rect x="228" y="919" width="10" height="10" fill="#a8a8a8"/><path d="M229.500 921.500H236.500M229.500 924H236.500M229.500 926.500H236.500" stroke="#2d2d2d"/>
<g class="d"><text x="243" y="929" textLength="46" lengthAdjust="spacingAndGlyphs">Console</text></g>
<circle cx="1047" cy="920" r="1.100" fill="#b0b0b0"/><circle cx="1047" cy="924" r="1.100" fill="#b0b0b0"/><circle cx="1047" cy="928" r="1.100" fill="#b0b0b0"/>
<rect x="219" y="934" width="841" height="19" fill="#2f2f2f"/><rect x="219" y="933" width="841" height="1" fill="#1c1c1c"/><rect x="219" y="953" width="841" height="1" fill="#1f1f1f"/>
<rect x="276" y="934" width="54" height="19" fill="#3c3c3c"/>
<path d="M258.500 937V949M275.500 934V953M331 934V953M408 934V953M459 934V953M957.500 934V953M991 934V953M1026 934V953" stroke="#202020"/>
<g class="d">
<text x="223" y="948" textLength="31" lengthAdjust="spacingAndGlyphs">Clear</text>
<text x="279" y="948" textLength="49" lengthAdjust="spacingAndGlyphs">Collapse</text>
<text x="339" y="948" textLength="64" lengthAdjust="spacingAndGlyphs">Error Pause</text>
<text x="412" y="948" textLength="32" lengthAdjust="spacingAndGlyphs">Editor</text>
<text x="979" y="948" textLength="7" lengthAdjust="spacingAndGlyphs">0</text>
<text x="1013" y="948" textLength="7" lengthAdjust="spacingAndGlyphs">0</text>
<text x="1047" y="948" textLength="7" lengthAdjust="spacingAndGlyphs">0</text>
</g>
<path d="M263 941H272L267.500 945.500ZM447 941H455L451 945.500Z" fill="#aaa"/>
<rect x="655.500" y="936.500" width="300" height="14" rx="3" fill="#202020" stroke="#171717"/>
<circle cx="662.500" cy="942.500" r="2" fill="none" stroke="#a0a0a0"/><path d="M664 944 666.500 946.500" stroke="#a0a0a0"/>
<circle cx="969" cy="943" r="6.500" fill="#585858"/><rect x="968" y="939" width="2" height="5" fill="#2d2d2d"/><rect x="968" y="945" width="2" height="2" fill="#2d2d2d"/>
<path d="M1003 936.500 1010 950H997Z" fill="#585858"/><rect x="1002.500" y="941" width="1.500" height="5" fill="#2d2d2d"/>
<circle cx="1037" cy="943" r="6.500" fill="#b0b0b0"/><rect x="1036" y="939" width="2" height="5" fill="#2d2d2d"/><rect x="1036" y="945" width="2" height="2" fill="#2d2d2d"/>

<!-- status -->
<rect x="0" y="962" width="1280" height="22" fill="#191919"/>
<path d="M1175.500 962V984M1201 962V984M1227 962V984M1253 962V984" stroke="#222"/>
<path d="M1183 968 1188 971 1193 968 1192 972 1194 975 1192 978 1193 981H1183L1184 978 1182 975 1184 972Z" fill="#a0a0a0"/><path d="M1181 967 1195 982" stroke="#191919" stroke-width="1.500"/>
<ellipse cx="1214" cy="969.500" rx="6" ry="2.500" fill="#a0a0a0"/><path d="M1208 971V979Q1214 982.500 1220 979V971Q1214 974 1208 971Z" fill="#a0a0a0"/><path d="M1208 976 1221 981" stroke="#191919"/>
<circle cx="1240" cy="974" r="5.500" fill="none" stroke="#a0a0a0" stroke-width="2" stroke-dasharray="3 1"/><path d="M1234 967 1247 981" stroke="#a0a0a0" stroke-width="1.300"/>
<circle cx="1266" cy="974" r="6.500" fill="none" stroke="#a0a0a0"/><path d="M1263 974 1265.500 976.500 1269.500 971.500" fill="none" stroke="#a0a0a0"/>

<!-- taskbar -->
<rect x="0" y="984" width="1280" height="40" fill="#1a1a1a"/>
<rect x="492" y="984" width="48" height="40" fill="#4d4d4d"/>
<rect x="398" y="1021" width="40" height="3" fill="#ffb2b8"/><rect x="447" y="1021" width="40" height="3" fill="#ffb2b8"/><rect x="492" y="1021" width="48" height="3" fill="#ffb2b8"/>
<path d="M16 997 23.500 996V1003.500H16ZM25 995.800 32 994.800V1003.500H25ZM16 1005H23.500V1012L16 1011ZM25 1005H32V1013L25 1012.300Z" fill="#fff"/>
<rect x="64" y="994" width="21" height="20" rx="4" fill="#0a0a5c"/><text x="67" y="1009" textLength="15" lengthAdjust="spacingAndGlyphs" class="b" style="font-size:14px;fill:#8f9fff">Ch</text>
<path d="M112 1000 131 994 131 1012 112 1016Z" fill="#e0e0e0"/><path d="M129 992 135 990V1004L132 1006V993Z" fill="#4fae72"/><rect x="115" y="1003" width="13" height="5" fill="#888"/><rect x="116" y="1010" width="9" height="2" fill="#3a9a60"/>
<rect x="161" y="992" width="24" height="25" rx="3" fill="#7aa80e"/><path d="M166 1001a7 6 0 0 1 14 0ZM166 1002H180V1012H166Z" fill="#cfe4a0"/><circle cx="173" cy="1007" r="3" fill="#7aa80e"/>
<rect x="210" y="994" width="24" height="10" fill="#ee3a24"/><text x="222" y="1002.500" text-anchor="middle" class="b" style="font-size:8px;fill:#fff">VOICE</text>
<rect x="210" y="1005" width="24" height="11" fill="#3a4a5a"/><text x="222" y="1013" text-anchor="middle" class="b" style="font-size:7px;fill:#dde">MEETER</text>
<circle cx="271" cy="1004" r="12" fill="#e33b2e"/><path d="M271 1004 260.600 998a12 12 0 0 0 4.400 16.400L271 1016Z" fill="#2ea84a"/><path d="M271 1004H283A12 12 0 0 1 271 1016Z" fill="#fbc02d"/><circle cx="271" cy="1004" r="5.500" fill="#fff"/><circle cx="271" cy="1004" r="4.300" fill="#3b78e7"/>
<rect x="309" y="993" width="22" height="22" rx="4" fill="#041a2c"/><text x="320" y="1009" text-anchor="middle" class="b" style="font-size:13px;fill:#31a8ff">Ps</text>
<circle cx="369" cy="1004" r="12" fill="#7b3fb0"/><path d="M362 996.500 365.500 998Q369 997 372.500 998L376 996.500 376.500 1001Q378 1004 376.500 1007 374.500 1010 371.500 1010.500V1014H366.500V1012Q363.500 1012.500 362 1010L364 1010.500 366.500 1010.500Q363 1009.500 361.500 1007 360 1004 361.500 1001Z" fill="#fff"/>
<path d="M407 994H417L420 997H429V1015H407Z" fill="#ffc83d"/><rect x="407" y="999" width="22" height="16" fill="#ffd766"/><rect x="414" y="1006" width="8" height="9" fill="#2a8ad4"/><rect x="416.500" y="1010" width="3" height="5" fill="#ffd766"/>
<circle cx="467" cy="1004" r="12" fill="#e33b2e"/><path d="M467 1004 456.600 998a12 12 0 0 0 10.400 18Z" fill="#2ea84a"/><path d="M467 1004H479A12 12 0 0 1 467 1016Z" fill="#fbc02d"/><circle cx="467" cy="1004" r="5" fill="#fff"/><circle cx="467" cy="1004" r="3.800" fill="#3b78e7"/><circle cx="473" cy="1012" r="7.500" fill="#1a1a1a"/><circle cx="473" cy="1012" r="5.500" fill="#e2452a"/><path d="M474 1007.500 470.500 1012.500H473L472 1016 476 1011H473.500Z" fill="#ffd54a"/>
<path d="M517 994 527 1000V1011L517 1016 507 1011V1000Z" fill="#fff"/><path d="M517 994 527 1000V1011L517 1016Z" fill="#111"/><path d="M517 999V1004L512 1008M517 1004 522 1008M513 1001 517 1004 521 1001" stroke="#555" stroke-width="2" fill="none"/>
<g fill="none" stroke="#e0e0e0" stroke-width="1.100">
<path d="M1037.500 1009 1043 1003.500 1048.500 1009" stroke-width="1.300"/>
<rect x="1063" y="1000" width="8" height="9" rx="1"/><path d="M1071 1003 1074 1001.500V1007.500L1071 1006M1063 998.500Q1067 996.500 1071 998.500M1063 1011Q1067 1012.500 1071 1011"/>
<path d="M1084.500 998.500H1091V1001H1098.500V1009.500H1084.500ZM1091 1009.500V1014M1087 1014H1095M1084.500 1001H1091"/>
<path d="M1108 1002H1111L1115 998.500V1011.500L1111 1008H1108ZM1117.500 1002.500Q1119 1005 1117.500 1007.500M1120 1000Q1122.500 1005 1120 1010M1122.500 998Q1126 1005 1122.500 1012"/>
</g>
<text x="1133" y="1008" textLength="24" lengthAdjust="spacingAndGlyphs" style="fill:#e6e6e6">ENG</text>
<text x="1174" y="999" textLength="43" lengthAdjust="spacingAndGlyphs" style="fill:#e6e6e6">3:44 PM</text>
<text x="1166" y="1017" textLength="58" lengthAdjust="spacingAndGlyphs" style="fill:#e6e6e6">10/14/2025</text>
<path d="M1239 996H1256V1009H1245L1242 1013V1009H1239Z" fill="#f0f0f0"/><path d="M1242 999.500H1253M1242 1002.500H1253M1242 1005.500H1250" stroke="#1a1a1a"/>
<circle cx="1254" cy="1011.500" r="7.500" fill="#1a1a1a" stroke="#777"/><text x="1254" y="1016" text-anchor="middle" style="font-size:12px;fill:#eee">3</text>
<path d="M1276.500 984V1024" stroke="#3c3c3c"/>
</svg>
</body></html>
